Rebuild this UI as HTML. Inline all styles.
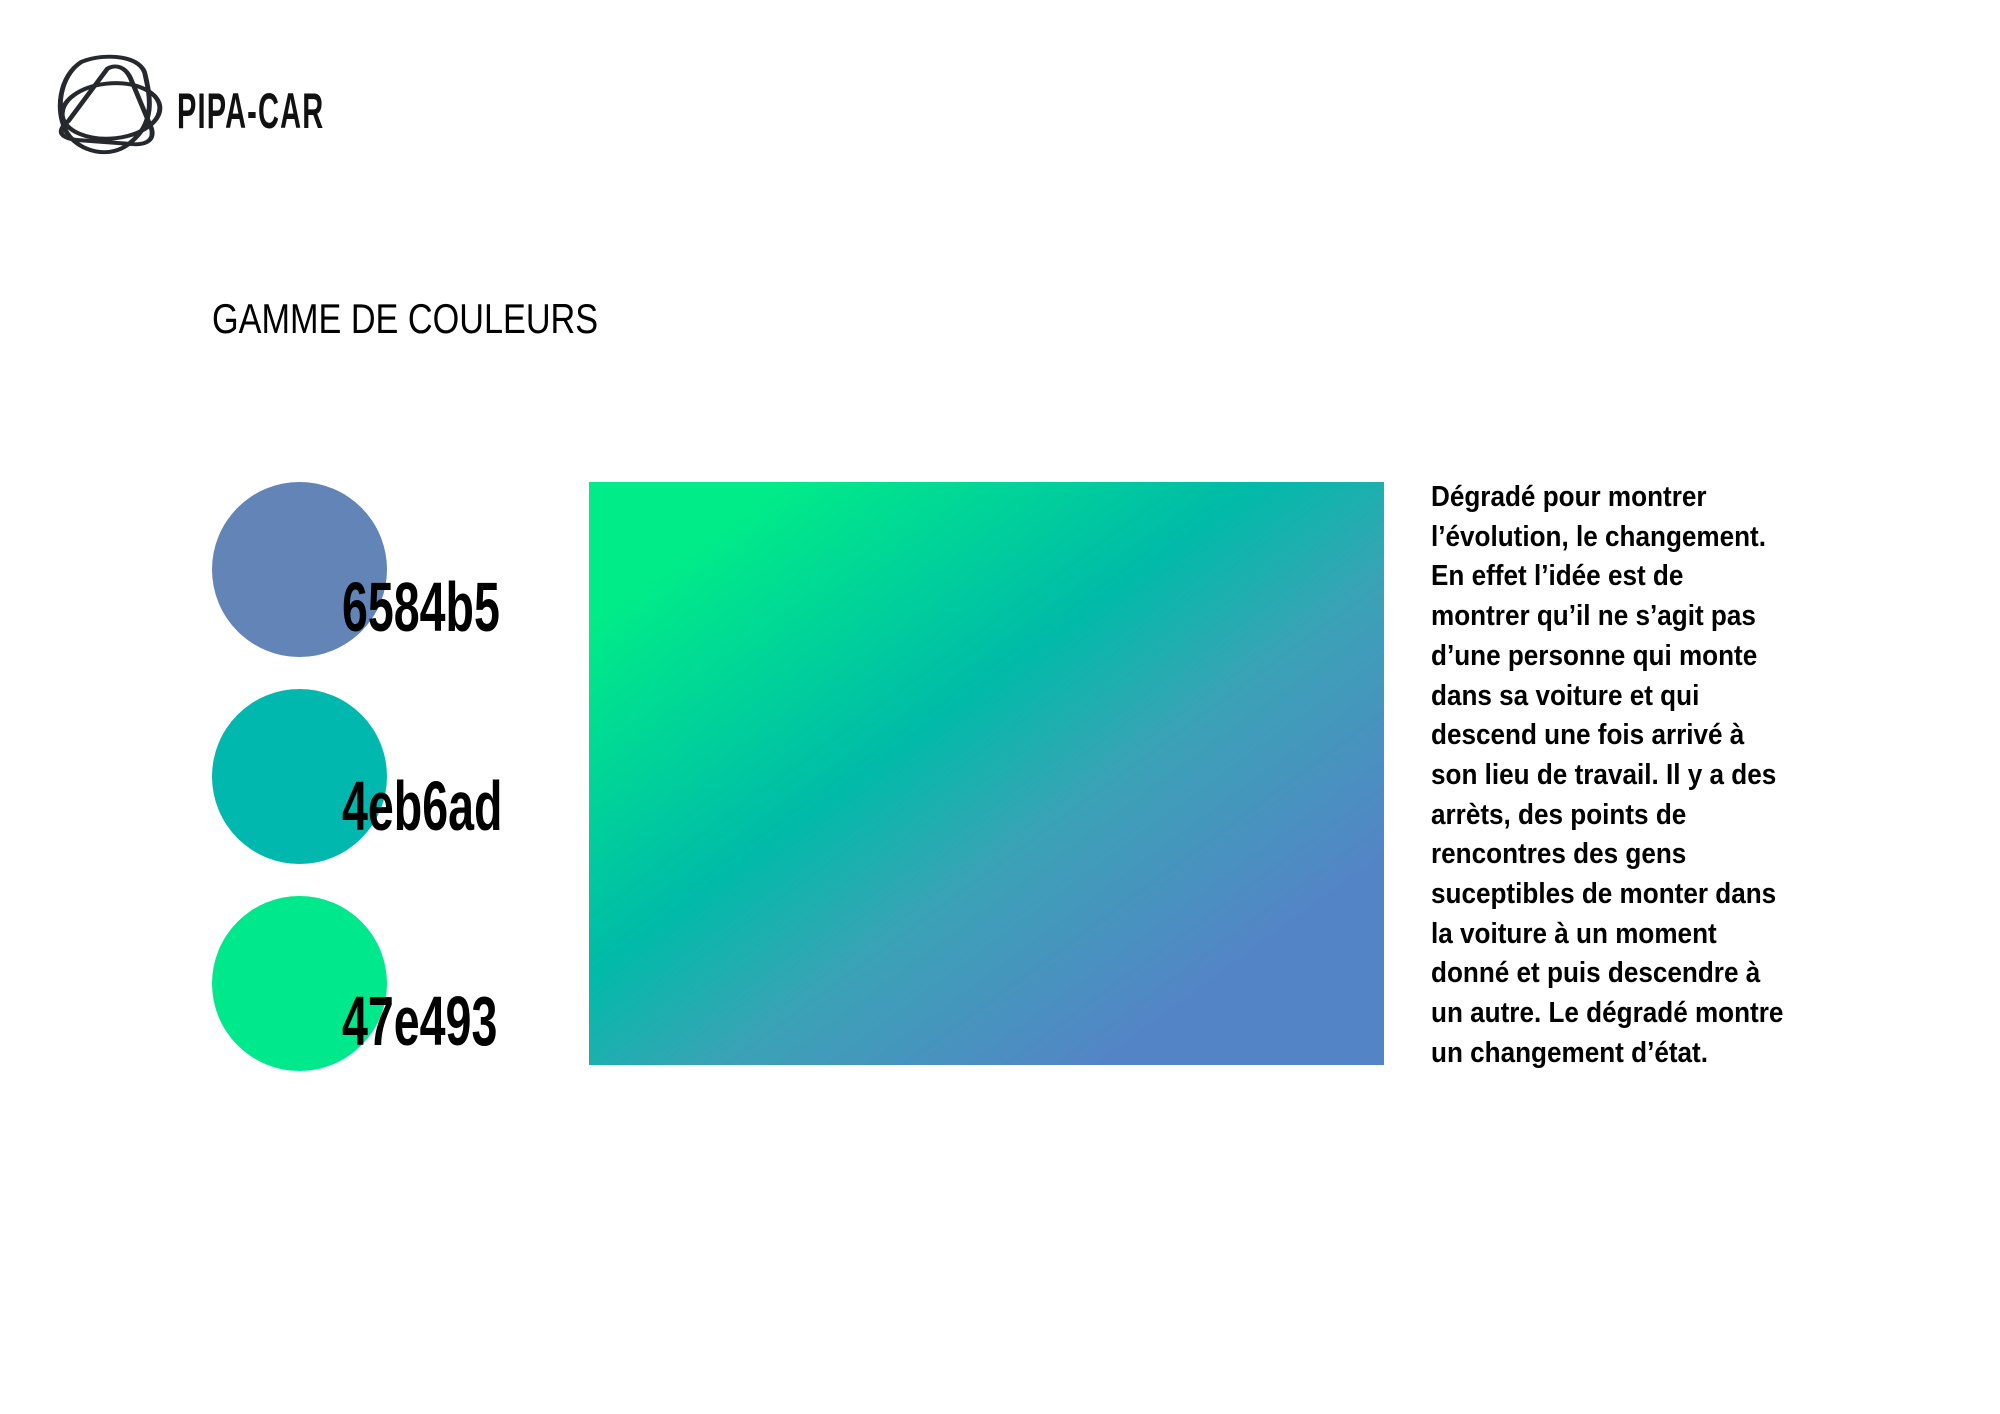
<!DOCTYPE html>
<html><head><meta charset="utf-8"><style>
body{margin:0;width:2000px;height:1414px;background:#fff;position:relative;overflow:hidden;font-family:"Liberation Sans",sans-serif;color:#000}
.c{position:absolute;left:212px;width:175px;height:175px;border-radius:50%}
.lab{position:absolute;left:342px;font-weight:bold;font-size:70px;line-height:70px;transform:scaleX(0.665);transform-origin:left top;white-space:nowrap}
.t{position:absolute;left:1431px;top:478px;font-weight:bold;font-size:29px;line-height:39.7px;transform:scaleX(0.9);transform-origin:left top;white-space:nowrap}
</style></head><body>
<svg style="position:absolute;left:57px;top:54px" width="108" height="106" viewBox="0 0 88 108" preserveAspectRatio="none" fill="none" stroke="#25282d" stroke-width="4">
<path d="M20 8 C40 -2 70 2 72 22 C76 44 80 70 60 90 C44 108 18 100 8 80 C-2 58 2 22 20 8Z"/>
<path d="M34 16 C40 10 48 12 54 22 L80 70 C84 80 80 86 70 88 L22 92 C8 92 4 86 12 74 Z" transform="rotate(10 44 56)"/>
<ellipse cx="44" cy="58" rx="40" ry="28" transform="rotate(-8 44 58)"/>
</svg>
<div style="position:absolute;left:177px;top:86px;font-weight:bold;font-size:50px;line-height:50px;letter-spacing:2px;transform:scaleX(0.58);transform-origin:left top;color:#111">PIPA-CAR</div>
<div style="position:absolute;left:212px;top:295px;font-size:42px;line-height:48px;transform:scaleX(0.815);transform-origin:left top;white-space:nowrap">GAMME DE COULEURS</div>
<div class="c" style="top:482px;background:#6284b7"></div>
<div class="c" style="top:689px;background:#00b8ae"></div>
<div class="c" style="top:896px;background:#00e88c"></div>
<div class="lab" style="top:572px">6584b5</div>
<div class="lab" style="top:771px">4eb6ad</div>
<div class="lab" style="top:986px">47e493</div>
<div style="position:absolute;left:589px;top:482px;width:795px;height:583px;background:linear-gradient(to bottom right,#00ec88 12%,#00bba8 42%,#3aa3b6 58%,#5385c6 82%)"></div>
<div class="t">Dégradé pour montrer<br>l’évolution, le changement.<br>En effet l’idée est de<br>montrer qu’il ne s’agit pas<br>d’une personne qui monte<br>dans sa voiture et qui<br>descend une fois arrivé à<br>son lieu de travail. Il y a des<br>arrèts, des points de<br>rencontres des gens<br>suceptibles de monter dans<br>la voiture à un moment<br>donné et puis descendre à<br>un autre. Le dégradé montre<br>un changement d’état.</div>
</body></html>
